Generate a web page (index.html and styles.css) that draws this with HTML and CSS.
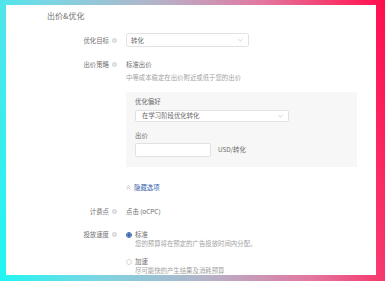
FILE: index.html
```html
<!DOCTYPE html>
<html lang="zh-CN">
<head>
    <meta charset="UTF-8">
    <title>出价&amp;优化</title>
    <link rel="stylesheet" href="styles.css">
</head>
<body>
    <div class="panel">
        <h2 class="section-title">出价&amp;优化</h2>

        <div class="row row-goal">
            <div class="label">优化目标 <span class="info"></span></div>
            <div class="field">
                <div class="select select-goal">
                    <span>转化</span>
                    <svg class="chevron" viewBox="0 0 6 4"><polyline points="0.5,0.8 3,3.2 5.5,0.8"/></svg>
                </div>
            </div>
        </div>

        <div class="row row-bid">
            <div class="label">出价策略 <span class="info"></span></div>
            <div class="field">
                <div class="value">标准出价</div>
                <div class="hint strategy-hint">中等成本稳定在出价附近或低于您的出价</div>

                <!-- 高级选项 -->
                <div class="options">
                    <div class="value">优化偏好</div>
                    <div class="select select-pref">
                        <span>在学习阶段优化转化</span>
                        <svg class="chevron" viewBox="0 0 6 4"><polyline points="0.5,0.8 3,3.2 5.5,0.8"/></svg>
                    </div>
                    <div class="value price-label">出价</div>
                    <div class="price">
                        <div class="input"></div>
                        <span class="unit">USD/转化</span>
                    </div>
                </div>

                <div class="toggle">
                    <svg class="double-up" viewBox="0 0 6 6"><polyline points="0.8,2.8 3,0.8 5.2,2.8"/><polyline points="0.8,5.2 3,3.2 5.2,5.2"/></svg>
                    <span>隐藏选项</span>
                </div>
            </div>
        </div>

        <div class="row row-billing">
            <div class="label">计费点 <span class="info"></span></div>
            <div class="field">
                <div class="value">点击 (oCPC)</div>
            </div>
        </div>

        <div class="row row-speed">
            <div class="label">投放速度 <span class="info"></span></div>
            <div class="field">
                <div class="radio checked">
                    <span class="dot"></span>
                    <div>
                        <div class="value">标准</div>
                        <div class="hint">您的预算将在预定的广告投放时间内分配。</div>
                    </div>
                </div>
                <div class="radio">
                    <span class="dot"></span>
                    <div>
                        <div class="value">加速</div>
                        <div class="hint">尽可能快的产生结果及消耗预算</div>
                    </div>
                </div>
            </div>
        </div>
    </div>
</body>
</html>
```

FILE: styles.css
```css
:root {
    --text-color: #6a6a6a;
    --hint-color: #a2a2a2;
    --border-color: #e2e2e2;
    --blue: #3563ad;
}

* {
    box-sizing: border-box;
    margin: 0;
    padding: 0;
}

html, body {
    height: 100%;
}

body {
    font-family: "Noto Sans CJK SC", "Noto Sans", sans-serif;
    font-size: 6.4px;
    line-height: 9px;
    color: var(--text-color);
    background: linear-gradient(80deg, #1ff6f2 0%, #7ad6e4 22%, #b6b2c8 48%, #e3769f 72%, #fb2a62 92%, #ff0c4c 100%);
    overflow: hidden;
    padding: 5px 9px 7px 6px;
}

.panel {
    background-color: white;
    height: 270px;
    overflow: hidden;
    padding-top: 6px;
}

.section-title {
    font-size: 8px;
    line-height: 10px;
    font-weight: 400;
    color: #707070;
    padding-left: 41px;
}

.row {
    display: flex;
    align-items: flex-start;
}

.label {
    width: 120px;
    flex-shrink: 0;
    display: flex;
    align-items: center;
    justify-content: flex-end;
    gap: 3px;
    padding-right: 9px;
    height: 9px;
    color: #707070;
}

.info {
    width: 5px;
    height: 5px;
    border-radius: 50%;
    background-color: #e6e6e6;
    border: 1px solid #d2d2d2;
}

.field {
    flex: 1;
}

.value {
    color: var(--text-color);
}

.hint {
    color: var(--hint-color);
}

/* Selects */
.select {
    display: flex;
    align-items: center;
    justify-content: space-between;
    background-color: white;
    border: 1px solid var(--border-color);
    border-radius: 2px;
    padding: 0 5px 0 4px;
}

.chevron {
    width: 5px;
    height: 4px;
    fill: none;
    stroke: #bbb;
    stroke-width: 0.8;
}

.row-goal {
    margin-top: 12px;
}

.row-goal .label {
    margin-top: 2.5px;
}

.select-goal {
    width: 123px;
    height: 14px;
}

.row-bid {
    margin-top: 12.5px;
}

.strategy-hint {
    margin-top: 4.5px;
}

.options {
    background-color: #f7f7f7;
    width: 231px;
    height: 75px;
    margin-top: 9.5px;
    padding: 5.5px 0 0 9px;
}

.select-pref {
    width: 154px;
    height: 12px;
    margin-top: 3.5px;
    padding-left: 6px;
}

.price-label {
    margin-top: 9.5px;
}

.price {
    display: flex;
    align-items: center;
    gap: 7px;
    margin-top: 2.5px;
}

.input {
    width: 76px;
    height: 14px;
    background-color: white;
    border: 1px solid var(--border-color);
    border-radius: 2px;
}

.unit {
    color: var(--text-color);
}

.toggle {
    display: flex;
    align-items: center;
    gap: 3px;
    margin-top: 16.5px;
    color: var(--blue);
}

.double-up {
    width: 5px;
    height: 5px;
    fill: none;
    stroke: #999;
    stroke-width: 0.7;
}

.row-billing {
    margin-top: 15px;
}

.row-speed {
    margin-top: 14px;
}

/* Radios */
.radio {
    display: flex;
    align-items: flex-start;
    gap: 3px;
}

.radio + .radio {
    margin-top: 9px;
}

.dot {
    width: 6px;
    height: 6px;
    margin-top: 1.5px;
    border-radius: 50%;
    border: 1px solid #d6d6d6;
    background-color: white;
    flex-shrink: 0;
}

.radio.checked .dot {
    border-color: var(--blue);
    background: radial-gradient(circle, var(--blue) 0 1.5px, white 1.8px);
}
```
